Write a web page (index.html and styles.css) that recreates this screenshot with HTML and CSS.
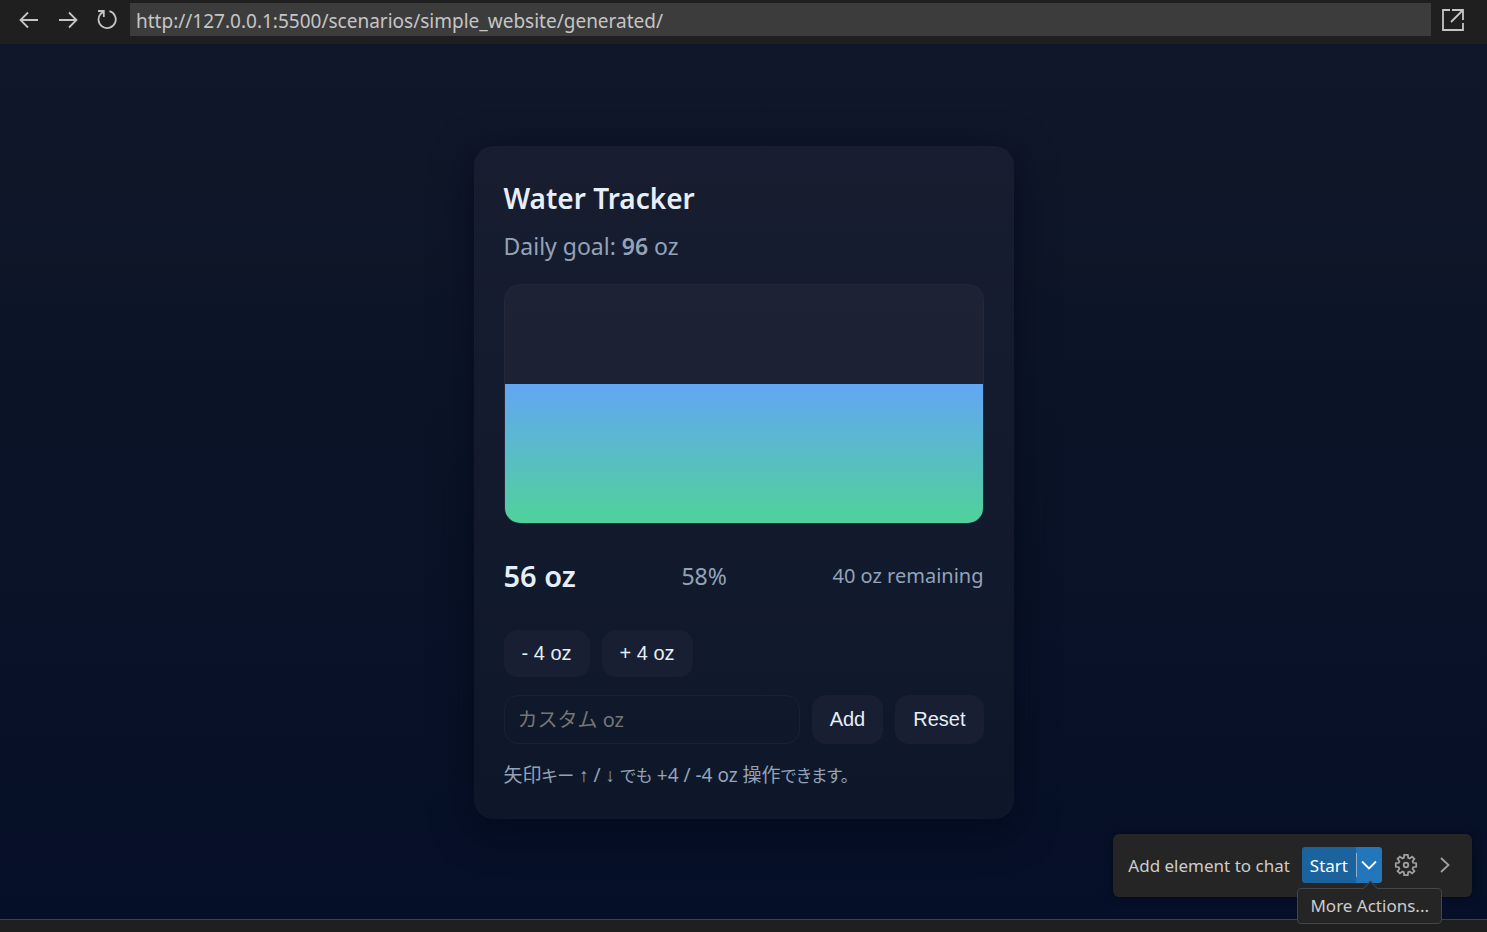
FILE: index.html
```html
<!DOCTYPE html>
<html lang="ja">
<head>
<meta charset="utf-8">
<meta name="viewport" content="width=device-width, initial-scale=1">
<title>Water Tracker</title>
<link rel="stylesheet" href="styles.css">
</head>
<body>
<header class="browser-bar">
  <nav class="browser-nav" aria-label="Navigation">
    <button class="icon-button" type="button" aria-label="Back">
      <svg width="20" height="18" viewBox="0 0 20 18"><path d="M19 9H1.5M9 1.5L1.5 9L9 16.5"/></svg>
    </button>
    <button class="icon-button" type="button" aria-label="Forward">
      <svg width="20" height="18" viewBox="0 0 20 18"><path d="M1 9H18.5M11 1.5L18.5 9L11 16.5"/></svg>
    </button>
    <button class="icon-button" type="button" aria-label="Reload">
      <svg width="20" height="20" viewBox="0 0 20 20"><path d="M1 1H6.8V7M6.5 1.5L3.5 4A8.6 8.6 0 1 0 12.5 1.2"/></svg>
    </button>
  </nav>
  <input class="address" type="text" aria-label="Address" value="http://127.0.0.1:5500/scenarios/simple_website/generated/">
  <button class="icon-button" type="button" aria-label="Open in browser">
    <svg width="24" height="24" viewBox="0 0 24 24"><path d="M9 2H2V22H22V15M11 2H22V12M22 2L10 14"/></svg>
  </button>
</header>

<main class="page">
  <section class="card">
    <h1 class="title">Water Tracker</h1>
    <p class="goal">Daily goal: <strong>96</strong> oz</p>
    <div class="vessel"><div class="water" style="height: 58.33%"></div></div>
    <div class="stats">
      <span class="amount">56 oz</span>
      <span class="percent">58%</span>
      <span class="remaining">40 oz remaining</span>
    </div>
    <div class="row">
      <button class="button" type="button">- 4 oz</button>
      <button class="button" type="button">+ 4 oz</button>
    </div>
    <form class="row custom">
      <input class="amount-input" type="text" aria-label="カスタム oz" placeholder="カスタム oz">
      <button class="button" type="button">Add</button>
      <button class="button" type="reset">Reset</button>
    </form>
    <p class="hint">矢印<span class="kana">キー</span> <span class="arrow">↑</span> / <span class="arrow">↓</span> <span class="kana">でも</span> +4 / -4 oz 操作<span class="kana">できます。</span></p>
  </section>

  <div class="chat-bar">
    <span class="chat-label">Add element to chat</span>
    <div class="split">
      <button class="start" type="button">Start</button>
      <button class="more" type="button" aria-label="More Actions" aria-describedby="more-tip">
        <svg width="16" height="10" viewBox="0 0 16 10"><path d="M1 1.5L8 8.5L15 1.5"/></svg>
      </button>
      <div class="tooltip" role="tooltip" id="more-tip">More Actions...</div>
    </div>
    <button class="icon-button gear" type="button" aria-label="Settings">
      <svg width="24" height="24" viewBox="-12 -12 24 24"><path d="M-1.8 -10.2H1.8L2.2 -7.2L3.7 -6.6L6.1 -8.4L8.4 -6.1L6.6 -3.7L7.2 -2.2L10.2 -1.8V1.8L7.2 2.2L6.6 3.7L8.4 6.1L6.1 8.4L3.7 6.6L2.2 7.2L1.8 10.2H-1.8L-2.2 7.2L-3.7 6.6L-6.1 8.4L-8.4 6.1L-6.6 3.7L-7.2 2.2L-10.2 1.8V-1.8L-7.2 -2.2L-6.6 -3.7L-8.4 -6.1L-6.1 -8.4L-3.7 -6.6L-2.2 -7.2Z"/><circle r="2.3"/></svg>
    </button>
    <button class="icon-button" type="button" aria-label="Collapse">
      <svg width="10" height="16" viewBox="0 0 10 16"><path d="M1 1L8.5 8L1 15"/></svg>
    </button>
  </div>
</main>
<footer class="panel-edge"></footer>
</body>
</html>
```
FILE: styles.css
```css
* {
  box-sizing: border-box;
}

body {
  margin: 0;
  min-height: 100vh;
  display: flex;
  flex-direction: column;
  background: #1f1f1f;
  color: #e6eef8;
  font-family: "Noto Sans", "Noto Sans CJK JP", sans-serif;
}

h1,
p {
  margin: 0;
}

button,
input {
  font: inherit;
  color: inherit;
  border: 0;
  margin: 0;
}

svg {
  display: block;
  fill: none;
  stroke: currentColor;
  stroke-width: 1.8;
}

.browser-bar {
  display: flex;
  align-items: center;
  gap: 10px;
  height: 44px;
  padding: 0 22px 5px 19px;
  color: #c5c5c5;
}

.browser-nav {
  display: flex;
  align-items: center;
  gap: 19px;
  padding-right: 3px;
}

.icon-button {
  padding: 0;
  background: none;
}

.address {
  flex: 1;
  min-width: 0;
  height: 33px;
  padding: 2px 6px 0;
  background: #3c3c3c;
  font-size: 19px;
}

.page {
  position: relative;
  flex: 1;
  display: grid;
  place-items: center;
  padding-top: 1px;
  background: linear-gradient(180deg, #11172a 0%, #0c1527 33%, #081127 75%, #050f28 100%);
}

.card {
  width: 540px;
  max-width: 100%;
  padding: 30px;
  border-radius: 20px;
  background: linear-gradient(180deg, #181d30, #0e172a);
  box-shadow: 0 10px 40px rgba(2, 6, 23, 0.6);
}

.title {
  font-size: 28px;
  font-weight: 600;
  line-height: 44px;
}

.goal {
  margin: 6px 0 18px;
  color: #94a3b8;
  font-size: 23px;
  line-height: 40px;
}

.goal strong {
  font-weight: 600;
}

.vessel {
  display: flex;
  flex-direction: column;
  justify-content: flex-end;
  height: 240px;
  border: 1px solid #23283a;
  border-radius: 16px;
  background: linear-gradient(180deg, #1e2235, #191f32);
  overflow: hidden;
}

.water {
  background: linear-gradient(180deg, #62a6f4, #50d29a);
}

.stats {
  display: flex;
  align-items: center;
  justify-content: space-between;
  margin: 30px 0 32px;
  line-height: 44px;
}

.amount {
  font-size: 29px;
  font-weight: 600;
}

.percent {
  color: #94a3b8;
  font-size: 23px;
}

.remaining {
  color: #94a3b8;
  font-size: 20px;
}

.row {
  display: flex;
  gap: 12px;
}

.button {
  padding: 12px 18px;
  border-radius: 14px;
  background: #181f32;
  font-family: "Liberation Sans", sans-serif;
  font-size: 20px;
  line-height: 23px;
}

.custom {
  margin: 18px 0;
}

.amount-input {
  flex: 1;
  min-width: 0;
  height: 49px;
  padding: 0 13px;
  border: 1px solid #1a2135;
  border-radius: 14px;
  background: transparent;
  font-size: 20px;
}

.amount-input::placeholder {
  color: #757575;
}

.hint {
  color: #94a3b8;
  font-size: 19px;
  line-height: 26px;
}

.kana {
  font-size: 17px;
  font-feature-settings: "palt";
}

.arrow {
  font-family: "Liberation Sans", sans-serif;
}

.chat-bar {
  position: absolute;
  right: 15px;
  bottom: 22px;
  display: flex;
  align-items: center;
  gap: 12px;
  padding: 13px 22px 14px 15px;
  border-radius: 6px;
  background: #252526;
  box-shadow: 0 0 10px rgba(0, 0, 0, 0.4);
  color: #cccccc;
  font-size: 17px;
}

.split {
  position: relative;
  display: flex;
  height: 36px;
  color: #ffffff;
}

.start {
  padding: 0 8px;
  border-radius: 3px 0 0 3px;
  background: #1b639d;
}

.more {
  position: relative;
  padding: 0 5px;
  border-radius: 0 3px 3px 0;
  background: #2276bb;
}

.more::before {
  content: "";
  position: absolute;
  left: 0;
  top: 6px;
  bottom: 6px;
  width: 1px;
  background: #8db1ce;
}

.gear {
  margin-right: 10px;
}

.chat-bar > .icon-button {
  color: #a0a0a0;
}

.tooltip {
  position: absolute;
  top: 41px;
  right: -60px;
  padding: 0 12px;
  border: 1px solid #454545;
  border-radius: 4px;
  background: #252526;
  color: #cccccc;
  line-height: 34px;
  white-space: nowrap;
}

.tooltip::before {
  content: "";
  position: absolute;
  left: 50%;
  top: -6px;
  width: 10px;
  height: 10px;
  margin-left: -5px;
  border: solid #454545;
  border-width: 1px 0 0 1px;
  background: #252526;
  transform: rotate(45deg);
}

.panel-edge {
  height: 13px;
  border-top: 1px solid #414141;
  background: #1f1f1f;
}
```
